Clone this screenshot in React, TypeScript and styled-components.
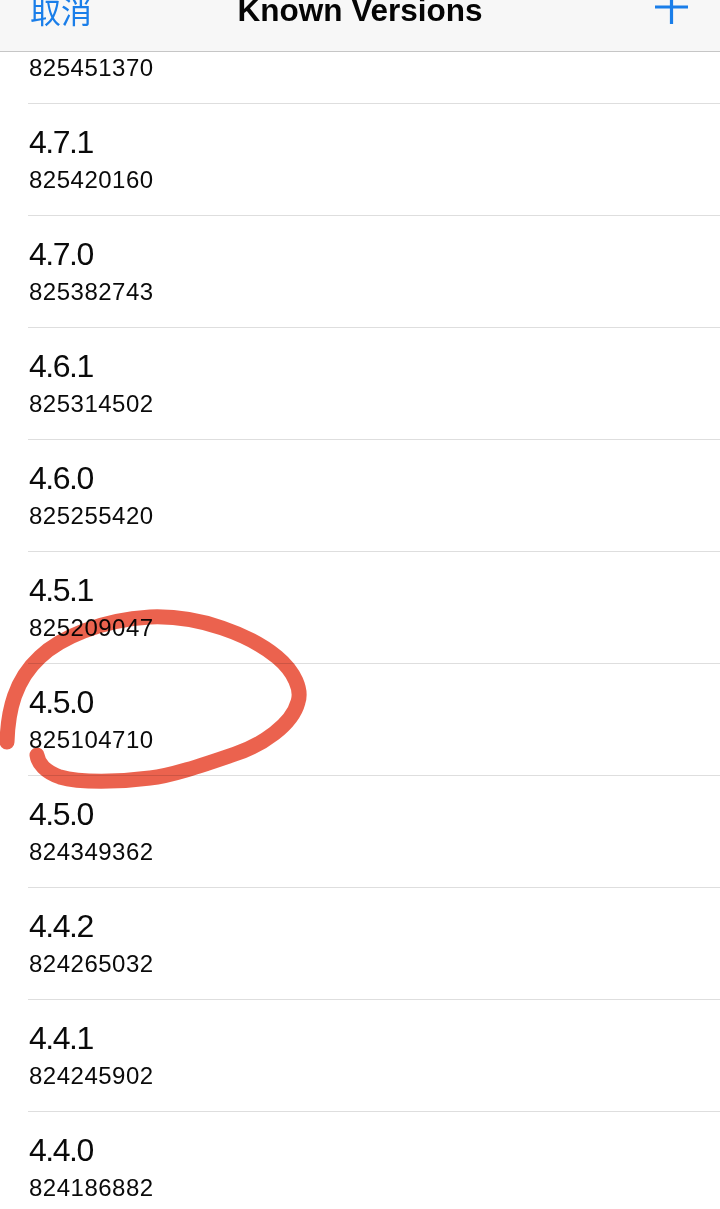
import React from "react";
import styled, { createGlobalStyle } from "styled-components";

const GlobalStyle = createGlobalStyle`
    html, body {
        margin: 0;
        padding: 0;
        background: #ffffff;
    }
    body {
        font-family: "Liberation Sans", Arial, "Noto Sans CJK SC", sans-serif;
        -webkit-font-smoothing: antialiased;
    }
`;

const blue = "#1a7ee9";

const Page = styled.div`
    position: relative;
    width: 720px;
    height: 1209px;
    overflow: hidden;
    background: #ffffff;
`;

const NavBar = styled.div`
    display: grid;
    grid-template-columns: 1fr auto 1fr;
    align-items: start;
    height: 51px;
    padding: 0 30px 0 30px;
    background: #f7f7f7;
    border-bottom: 1px solid #c6c6c6;
    overflow: hidden;
`;

const Cancel = styled.span`
    justify-self: start;
    margin-top: -6px;
    font-family: "Noto Sans CJK SC", "Noto Sans CJK JP", sans-serif;
    font-size: 31px;
    line-height: 31px;
    color: ${blue};
`;

const Title = styled.span`
    margin-top: -5px;
    font-size: 31.5px;
    line-height: 31px;
    font-weight: bold;
    color: #050505;
`;

const AddIcon = styled.svg`
    display: block;
    justify-self: end;
    margin-top: -1px;
`;

const Scroller = styled.div`
    overflow: hidden;
    height: calc(1209px - 52px);
`;

const List = styled.div`
    margin-top: -60px;
`;

const Row = styled.div`
    display: flex;
    flex-direction: column;
    justify-content: flex-end;
    height: 112px;
    margin-left: 28px;
    padding: 0 0 21px 1px;
    border-bottom: 1px solid #dedede;
    box-sizing: border-box;
`;

const Version = styled.div`
    font-size: 32px;
    line-height: 38px;
    letter-spacing: -1.5px;
    color: #0a0a0a;
`;

const Build = styled.div`
    margin-top: 5px;
    font-size: 24px;
    line-height: 28px;
    letter-spacing: 0.5px;
    color: #0a0a0a;
`;

const Annotation = styled.svg`
    position: absolute;
    left: 0;
    top: 0;
    pointer-events: none;
    mix-blend-mode: multiply;
`;

// the first row is scrolled under the bar, only its build number shows
const versions: { version?: string; build: string }[] = [
    { build: "825451370" },
    { version: "4.7.1", build: "825420160" },
    { version: "4.7.0", build: "825382743" },
    { version: "4.6.1", build: "825314502" },
    { version: "4.6.0", build: "825255420" },
    { version: "4.5.1", build: "825209047" },
    { version: "4.5.0", build: "825104710" },
    { version: "4.5.0", build: "824349362" },
    { version: "4.4.2", build: "824265032" },
    { version: "4.4.1", build: "824245902" },
    { version: "4.4.0", build: "824186882" },
];

const App = () => {
    return (
        <Page>
            <GlobalStyle />
            <NavBar>
                <Cancel>取消</Cancel>
                <Title>Known Versions</Title>
                <AddIcon width="36" height="26" viewBox="0 0 36 26">
                    <path d="M1 8 H34 M17.5 0 V25" stroke={blue} strokeWidth="3.2" fill="none" />
                </AddIcon>
            </NavBar>
            <Scroller>
                <List>
                    {versions.map((v, i) => (
                        <Row key={i}>
                            {v.version && <Version>{v.version}</Version>}
                            <Build>{v.build}</Build>
                        </Row>
                    ))}
                </List>
            </Scroller>
            <Annotation width="720" height="1209" viewBox="0 0 720 1209">
                <path
                    d="M7 742 C 8 710, 15 680, 40 657 C 60 638, 100 620, 150 617 C 200 615, 250 635, 277 657 C 295 672, 302 690, 298 702 C 292 725, 262 745, 235 754 C 200 766, 170 776, 150 778 C 120 782, 80 783, 60 777 C 45 772, 38 763, 37 755"
                    stroke="#e9553f"
                    strokeWidth="15"
                    strokeLinecap="round"
                    fill="none"
                    opacity="0.92"
                />
            </Annotation>
        </Page>
    );
};

export default App;
